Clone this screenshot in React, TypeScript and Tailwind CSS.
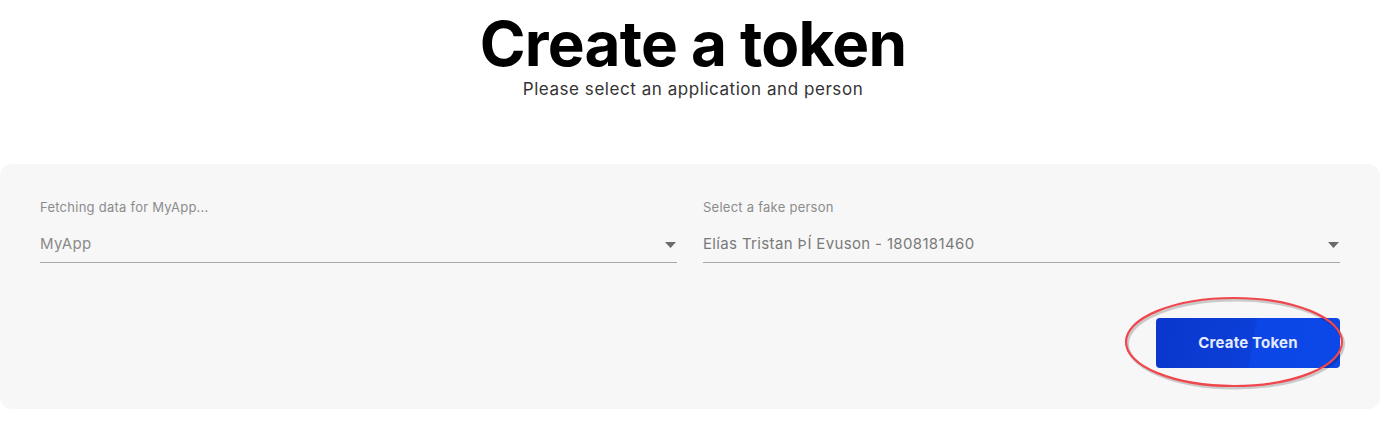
import React from 'react';

const font = { fontFamily: 'Inter, "Liberation Sans", sans-serif' };

function Field({ label, value, valueClass }: { label: string; value: string; valueClass: string }) {
  return (
    <div className="flex-1 flex flex-col">
      <span className="text-[13px] leading-[16px] text-[#8c8c8c] tracking-[0.25px]">{label}</span>
      <div className="mt-[20px] flex items-center justify-between border-b border-[#a8a8a8] pb-[9px]">
        <span className={`text-[15px] leading-[18px] tracking-[0.35px] ${valueClass}`}>{value}</span>
        <svg width="11" height="7" viewBox="0 0 11 7" className="mr-[1px] mt-[2px]">
          <path d="M0 0 L11 0 L5.5 6 Z" fill="#6b6b6b" />
        </svg>
      </div>
    </div>
  );
}

export default function App() {
  return (
    <div className="w-[1386px] h-[422px] bg-white overflow-hidden" style={font}>
      {/* Heading */}
      <div className="flex flex-col items-center pt-[10px]">
        <h1 className="text-[62px] leading-[68px] font-bold text-black tracking-[-0.8px]">Create a token</h1>
        <p className="text-[17px] leading-[20px] text-[#333] tracking-[0.55px] mt-[1px]">
          Please select an application and person
        </p>
      </div>

      {/* Form panel */}
      <div className="mt-[65px] mr-[6px] rounded-[12px] bg-[#f7f7f7] h-[245px] px-[40px] pt-[35px]">
        <div className="flex gap-[26px]">
          <Field label="Fetching data for MyApp..." value="MyApp" valueClass="text-[#8a8a8a]" />
          <Field label="Select a fake person" value="Elías Tristan ÞÍ Evuson - 1808181460" valueClass="text-[#7a7a7a]" />
        </div>

        <div className="flex justify-end mt-[55px]">
          <div className="relative">
            <button className="w-[184px] h-[50px] rounded-[4px] text-[#e4eaff] text-[15px] font-bold tracking-[0.2px] bg-[linear-gradient(100deg,#0a37cc_0%,#0b3fd8_52%,#0c46e6_53%,#0c47e8_100%)]">
              Create Token
            </button>
            <svg
              className="absolute pointer-events-none"
              style={{ left: -34, top: -24 }}
              width="224"
              height="98"
              viewBox="0 0 224 98"
            >
              <ellipse cx="112" cy="48" rx="108" ry="44" fill="none" stroke="rgba(0,0,0,0.18)" strokeWidth="3" transform="translate(1.5,2)" />
              <ellipse cx="112" cy="48" rx="108" ry="44" fill="none" stroke="#f0474d" strokeWidth="2.2" />
            </svg>
          </div>
        </div>
      </div>
    </div>
  );
}
